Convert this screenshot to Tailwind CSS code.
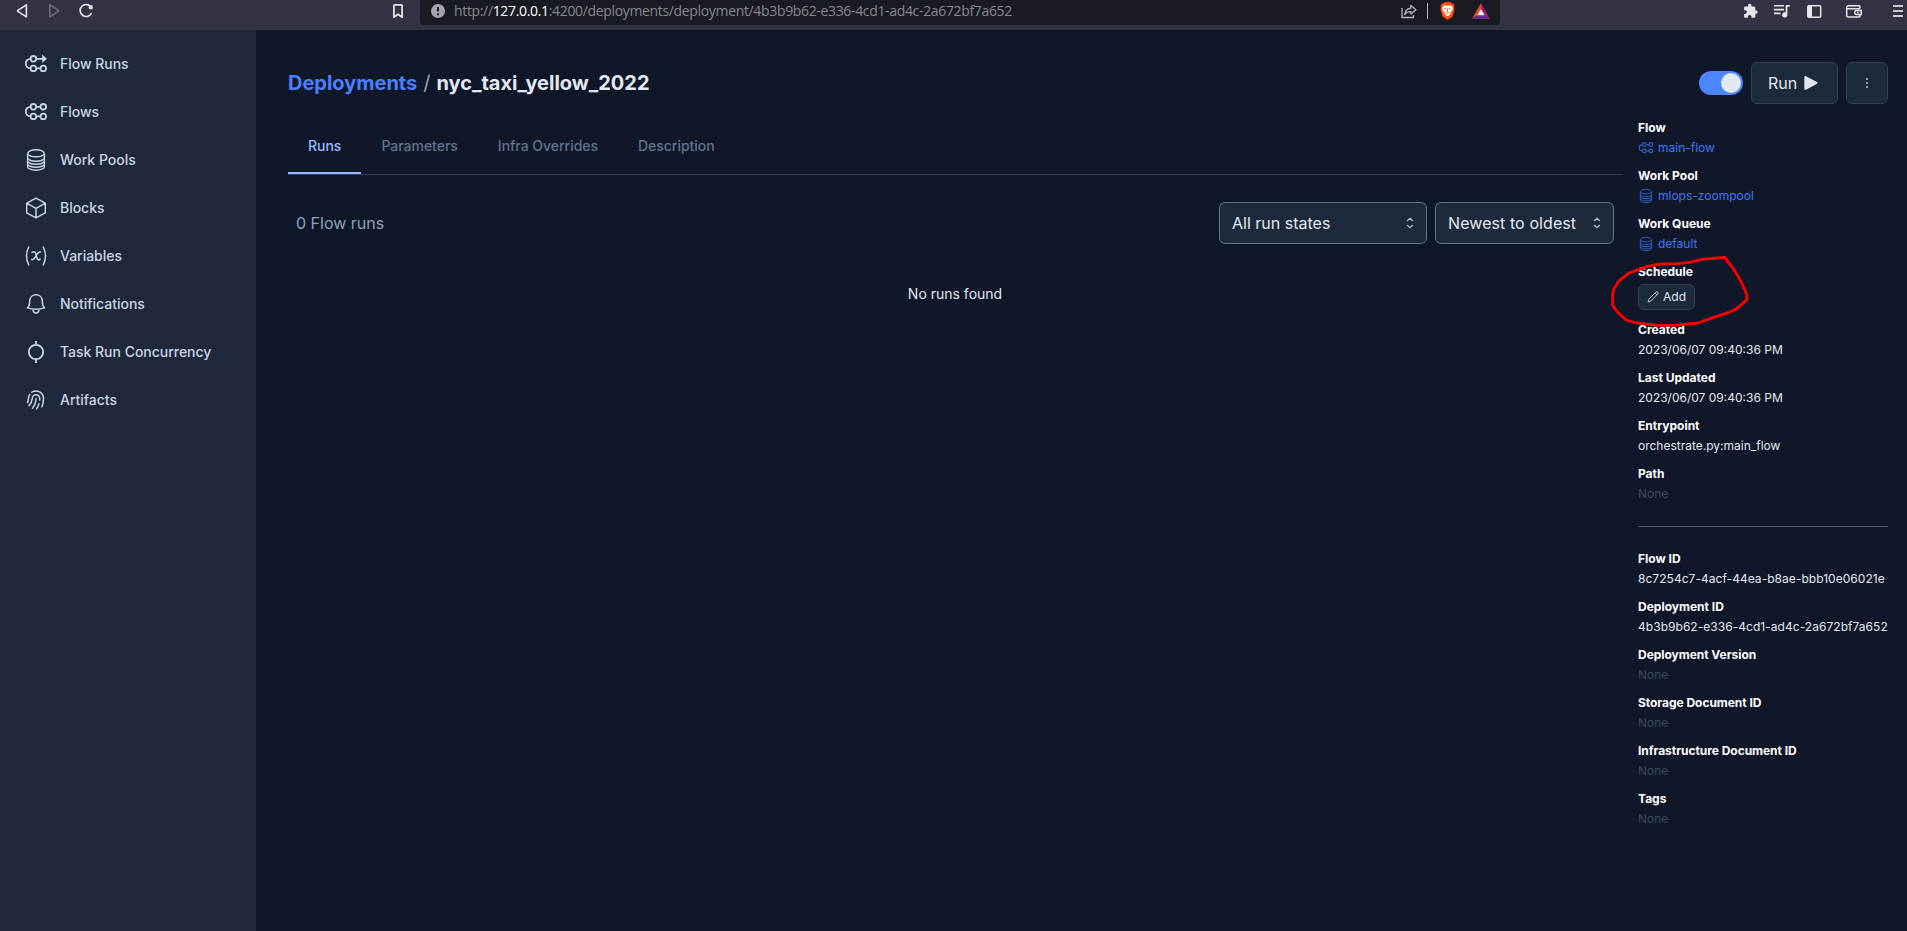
<!DOCTYPE html>
<html lang="en">
<head>
<meta charset="utf-8">
<title>Deployment</title>
<script src="https://cdn.jsdelivr.net/npm/@tailwindcss/browser@4"></script>
</head>
<body class="relative h-[931px] w-[1907px] overflow-hidden bg-[#101728] font-['Inter',sans-serif] text-sm text-slate-200">
<svg class="hidden">
  <defs>
    <symbol id="flow" viewBox="0 0 24 24"><g fill="none" stroke="currentColor" stroke-width="1.8"><circle cx="9.4" cy="6.8" r="2.8"/><circle cx="19.3" cy="6.8" r="2.8"/><circle cx="9.4" cy="16.4" r="2.8"/><circle cx="19.3" cy="16.4" r="2.8"/><path d="M12.2 6.8h4.3M12.2 16.4h4.3M6.6 6.8C3.6 6.8 1.8 9 1.8 11.6s1.8 4.8 4.8 4.8"/></g></symbol>
    <symbol id="pool" viewBox="0 0 24 24"><g fill="none" stroke="currentColor" stroke-width="1.4"><ellipse cx="12" cy="5.3" rx="8.4" ry="3.5"/><path d="M3.6 5.3v13.4c0 1.9 3.8 3.5 8.4 3.5s8.4-1.6 8.4-3.5V5.3M3.6 9.8c0 1.9 3.8 3.5 8.4 3.5s8.4-1.6 8.4-3.5M3.6 12.8c0 1.9 3.8 3.5 8.4 3.5s8.4-1.6 8.4-3.5M3.6 15.8c0 1.9 3.8 3.5 8.4 3.5s8.4-1.6 8.4-3.5"/></g></symbol>
  </defs>
</svg>

<!-- Browser toolbar -->
<header class="flex h-[30px] items-start bg-[#323443] text-[#e6e6ea]">
  <svg class="ml-4 mt-[3px] size-4" viewBox="0 0 16 16" fill="none" stroke="currentColor" stroke-width="1.6" stroke-linejoin="round"><path d="M10.4 1.8v12L1.8 8.3a.6.6 0 0 1 0-1z"/></svg>
  <svg class="ml-4 mt-[3px] size-4 text-[#6c6e7b]" viewBox="0 0 16 16" fill="none" stroke="currentColor" stroke-width="1.6" stroke-linejoin="round"><path d="M1.8 1.8v12l8.6-5.5a.6.6 0 0 0 0-1z"/></svg>
  <svg class="ml-[14px] mt-[3px] size-4" viewBox="0 0 16 16" fill="none" stroke="currentColor" stroke-width="1.6"><path d="M12.7 3.6A6 6 0 1 0 13.6 10"/><path d="M10 2.3h4.4v4.4z" fill="currentColor" stroke="none"/><circle cx="12.6" cy="4.4" r="2" fill="currentColor" stroke="none"/></svg>
  <svg class="ml-[298px] mt-[3px] h-4 w-[12px]" viewBox="0 0 12 16" fill="none" stroke="currentColor" stroke-width="1.7" stroke-linejoin="round"><path d="M1.9 2.8a1 1 0 0 1 1-1h6.2a1 1 0 0 1 1 1v11.4L6 11.2l-4.1 3z"/></svg>
  <div class="ml-4 flex h-[25px] w-[1080px] items-start rounded-b bg-[#191b22]">
    <svg class="ml-[11px] mt-1 size-[14px]" viewBox="0 0 14 14"><circle cx="7" cy="7" r="7" fill="#a2a4ad"/><path d="M7 3v4.6M7 9.3v2" stroke="#191b22" stroke-width="2"/></svg>
    <div class="ml-[9px] w-[560px] whitespace-nowrap font-['Open_Sans',sans-serif] text-[14px] leading-[22px] text-[#878890]"><span class="inline-block tracking-[-0.34px]">http://<span class="text-white">127.0.0.1</span>:4200/deployments/deployment/4b3b9b62-e336-4cd1-ad4c-2a672bf7a652</span></div>
    <svg class="ml-[387px] mt-[4px] size-4" viewBox="0 0 16 16" fill="none" stroke="#b4b5bb" stroke-width="1.3"><path d="M1 4v9.500h11.500V11"/><path d="M9.800 1.500 15 5.700l-5.200 4.200V7.600C7 7.500 5 8.600 3.800 10.800c.2-3.500 2.300-6 6-6.600z" stroke-linejoin="round"/></svg>
    <div class="ml-[10px] mt-[3px] h-4 w-px bg-[#b9bac0]"></div>
    <svg class="ml-[12px] mt-[2px] h-[18px] w-[15px]" viewBox="0 0 15 18"><path d="M4.500 0h6l1.400 1.600 1.700.2.900 2.700-.3 1.200.400 1.300-2 7.500L7.500 18l-5.100-3.500-2-7.500.400-1.300-.3-1.200.9-2.700 1.700-.2z" fill="#fb4c0c"/><path d="M4 3.300l3.500.5 3.500-.5L13 6l-.9 2.800-1.700 1.900.2 1.400-3.100 2.300-3.100-2.300.2-1.400L2.900 8.800 2 6z" fill="#fff"/><path d="M4.300 6.300l2 .6M10.700 6.300l-2 .6M7.500 6.500v3.400M5.500 10.500l2 1 2-1" stroke="#fb4c0c" stroke-width=".9" fill="none"/></svg>
    <svg class="ml-[17px] mt-[3px] h-4 w-[18px]" viewBox="0 0 18 16"><path d="M9 0v6L5.500 12.300 0 16z" fill="#ff4724"/><path d="M9 0l9 16-5.500-3.700L9 6z" fill="#9e1f63"/><path d="M0 16l5.500-3.700h7L18 16z" fill="#662d91"/><path d="M9 6l3.500 6.300h-7z" fill="#fff"/></svg>
  </div>
  <svg class="ml-[243px] mt-[3px] size-4" viewBox="0 0 16 16" fill="currentColor"><path d="M13.300 7.500h-1V4.800c0-.7-.6-1.300-1.300-1.300H8.500v-1a1.700 1.700 0 0 0-3.400 0v1H2.400c-.7 0-1.300.6-1.300 1.300v2.500h1a1.800 1.800 0 0 1 0 3.600h-1v2.500c0 .7.600 1.300 1.300 1.300h2.500v-1a1.800 1.800 0 0 1 3.600 0v1H11c.7 0 1.300-.6 1.300-1.300v-2.600h1a1.700 1.700 0 0 0 0-3.300z"/></svg>
  <svg class="ml-[14px] mt-[3px] h-4 w-[18px]" viewBox="0 0 18 16" fill="currentColor"><path d="M1 2h10v1.600H1zM1 5.800h10v1.600H1zM1 9.600h6.500v1.600H1z"/><path d="M12.700 2h4v1.800h-2.300v8a2.600 2.600 0 1 1-1.700-2.400z"/></svg>
  <svg class="ml-[16px] mt-[4px] size-[15px]" viewBox="0 0 15 15"><rect x=".8" y="1.800" width="12.900" height="11.400" rx="1" fill="none" stroke="currentColor" stroke-width="1.500"/><path d="M1 2h4v11H1z" fill="currentColor"/></svg>
  <svg class="ml-[23px] mt-[3px] h-4 w-[18px]" viewBox="0 0 18 16" fill="none" stroke="currentColor" stroke-width="1.500"><path d="M15 5.500V4a1.200 1.200 0 0 0-1.200-1.200H3.200A1.700 1.700 0 0 0 1.700 4.500v8c0 .9.600 1.500 1.500 1.500h10.600c.7 0 1.200-.5 1.200-1.200v-1.300M2 5.700h13"/><path d="M16.300 7.400h-4.600a2 2 0 0 0 0 4h4.600z"/><path d="M12 9.400h1.600"/></svg>
  <div class="ml-[30px] mt-[5px] flex w-[10px] flex-col gap-[3px]"><i class="h-[2px] bg-[#c9cad0]"></i><i class="h-[2px] bg-[#c9cad0]"></i><i class="h-[2px] bg-[#c9cad0]"></i></div>
</header>

<div class="flex h-[901px]">
  <nav class="flex w-64 shrink-0 flex-col bg-[#1f293b] pt-[10px] font-medium tracking-[-0.02px] text-slate-300">
    <a class="flex h-12 items-center gap-3 px-6"><svg class="size-6" viewBox="0 0 24 24"><g fill="none" stroke="currentColor" stroke-width="1.800"><circle cx="9.400" cy="6.800" r="2.800"/><circle cx="9.400" cy="16.400" r="2.800"/><circle cx="19.300" cy="16.400" r="2.800"/><path d="M12.200 6.800h7M12.200 16.400h4.300M6.600 6.800C3.600 6.800 1.800 9 1.800 11.600s1.800 4.800 4.800 4.800"/></g><path d="M18.200 2.600v8.400l4.800-4.200z" fill="currentColor"/></svg>Flow Runs</a>
    <a class="flex h-12 items-center gap-3 px-6"><svg class="size-6"><use href="#flow"/></svg>Flows</a>
    <a class="flex h-12 items-center gap-3 px-6"><svg class="size-6"><use href="#pool"/></svg>Work Pools</a>
    <a class="flex h-12 items-center gap-3 px-6"><svg class="size-6" viewBox="0 0 24 24" fill="none" stroke="currentColor" stroke-width="1.500" stroke-linejoin="round"><path d="M12 2.200l9.300 5v9.600L12 21.800l-9.300-5V7.200zM2.700 7.200l9.300 5.100 9.300-5.100M12 12.300v9.500"/></svg>Blocks</a>
    <a class="flex h-12 items-center gap-3 px-6"><svg class="size-6" viewBox="0 0 24 24" fill="none" stroke="currentColor" stroke-width="1.500" stroke-linecap="round"><path d="M4.700 3C2 8.500 2 15.500 4.700 21M19.300 3c2.700 5.500 2.700 12.500 0 18"/><path d="M8 8.300c2.200-1.300 3.300-.3 3.800 1.600l1.100 4c.5 1.900 1.700 2.600 3.300 1.300M16.500 8c-1.700-.4-2.800.7-4.300 3.700S9.400 16 7.700 15.600"/></svg>Variables</a>
    <a class="flex h-12 items-center gap-3 px-6"><svg class="size-6" viewBox="0 0 24 24" fill="none" stroke="currentColor" stroke-width="1.500" stroke-linejoin="round" stroke-linecap="round"><path d="M12 2.800c-3.900 0-6.300 2.800-6.300 6.500 0 3.400-.8 5.300-2.200 6.600 2.500.8 5.300 1.300 8.500 1.300s6-.5 8.500-1.300c-1.400-1.300-2.200-3.200-2.200-6.600 0-3.700-2.400-6.500-6.300-6.500zM9 17.300c0 2.200 1.300 3.700 3 3.700s3-1.500 3-3.700"/></svg>Notifications</a>
    <a class="flex h-12 items-center gap-3 px-6"><svg class="size-6" viewBox="0 0 24 24" fill="none" stroke="currentColor" stroke-width="1.800"><circle cx="12" cy="12" r="7.200"/><path d="M12 1v3.800M12 19.200V23"/></svg>Task Run Concurrency</a>
    <a class="flex h-12 items-center gap-3 px-6"><svg class="size-6" viewBox="0 0 24 24" fill="none" stroke="currentColor" stroke-width="1.500" stroke-linecap="round" stroke-linejoin="round"><path d="M7.860 4.240A7.500 7.500 0 0 1 19.500 10.500c0 2.920-.556 5.709-1.568 8.270M5.740 6.360A7.460 7.460 0 0 0 4.500 10.500a7.460 7.460 0 0 1-1.150 3.990M5 17.650A11.200 11.200 0 0 0 8.250 10.500a3.750 3.750 0 1 1 7.500 0c0 .527-.021 1.049-.064 1.565M12 10.500a14.900 14.900 0 0 1-3.600 9.750M15.030 15.600A18.600 18.600 0 0 1 12.500 21"/></svg>Artifacts</a>
  </nav>

  <main class="flex-1 pl-8 pr-[19px] pt-8">
    <div class="flex h-[42px] items-center justify-between">
      <h1 class="flex gap-[6px] text-xl font-bold leading-7 tracking-[-0.01px]"><span class="text-[#4a80ff]">Deployments</span><span class="font-normal text-slate-400">/</span><span>nyc_taxi_yellow_2022</span></h1>
      <div class="flex items-center gap-2">
        <div class="flex h-6 w-11 items-center justify-end rounded-full bg-[#4d84ff] pr-0.5"><i class="size-5 rounded-full bg-slate-200"></i></div>
        <button class="flex h-[42px] w-[87px] items-center gap-[7px] rounded-md border border-[#334155] bg-[#1e293b] pl-4 text-base">Run<svg class="h-4 w-[14px]" viewBox="0 0 14 16" fill="currentColor"><path d="M.3 2.200C.3 1.300 1.200.8 2 1.200l11 5.900c.7.400.7 1.300 0 1.700L2 14.700c-.8.400-1.700 0-1.700-1z"/></svg></button>
        <button class="flex size-[42px] items-center justify-center rounded-md border border-[#334155] bg-[#1e293b]"><span class="flex flex-col gap-[2px]"><i class="size-[2px] bg-slate-400"></i><i class="size-[2px] bg-slate-400"></i><i class="size-[2px] bg-slate-400"></i></span></button>
      </div>
    </div>

    <div class="mt-4 flex gap-4">
      <section class="min-w-0 flex-1">
        <div class="flex h-[55px] border-b border-[#334155] font-medium tracking-[-0.02px] text-slate-500">
          <a class="h-[54px] border-b-2 border-[#9bb8ff] px-5 leading-[52px] text-[#9bb8ff]">Runs</a>
          <a class="px-5 leading-[52px]">Parameters</a>
          <a class="px-5 leading-[52px]">Infra Overrides</a>
          <a class="px-5 leading-[52px]">Description</a>
        </div>
        <div class="mt-[19px] flex h-[58px] items-center gap-2 bg-[#0e1728] px-2 text-base">
          <span class="flex-1 text-slate-400">0 Flow runs</span>
          <div class="flex h-[42px] w-[208px] items-center justify-between rounded-md border border-slate-500 bg-[#1e293b] pl-3 pr-[12px]">All run states<svg class="h-3 w-2" viewBox="0 0 8 12" fill="none" stroke="#b6c1d0" stroke-width="1.200" stroke-linecap="round"><path d="M1.400 3.700 4 1.400l2.600 2.300M1.400 8.300 4 10.600l2.600-2.300"/></svg></div>
          <div class="flex h-[42px] w-[179px] items-center justify-between rounded-md border border-slate-500 bg-[#1e293b] pl-3 pr-[12px]"><span class="tracking-[0.08px]">Newest to oldest</span><svg class="h-3 w-2" viewBox="0 0 8 12" fill="none" stroke="#b6c1d0" stroke-width="1.200" stroke-linecap="round"><path d="M1.400 3.700 4 1.400l2.600 2.300M1.400 8.300 4 10.600l2.600-2.300"/></svg></div>
        </div>
        <p class="mt-8 text-center">No runs found</p>
      </section>

      <aside class="w-[250px] shrink-0 text-xs">
        <dl class="flex flex-col gap-3 whitespace-nowrap">
          <div><dt class="font-bold text-white">Flow</dt><dd class="mt-1 flex h-4 items-center gap-1 text-[#4076fa]"><svg class="size-4 opacity-75"><use href="#flow"/></svg>main-flow</dd></div>
          <div><dt class="font-bold text-white">Work Pool</dt><dd class="mt-1 flex h-4 items-center gap-1 text-[#4076fa]"><svg class="size-4 opacity-75"><use href="#pool"/></svg>mlops-zoompool</dd></div>
          <div><dt class="font-bold text-white">Work Queue</dt><dd class="mt-1 flex h-4 items-center gap-1 text-[#4076fa]"><svg class="size-4 opacity-75"><use href="#pool"/></svg>default</dd></div>
          <div><dt class="font-bold text-white">Schedule</dt><dd class="mt-1 flex h-[26px] w-[57px] items-center gap-1 rounded-md border border-[#334155] bg-[#1e293b] pl-2"><svg class="size-3" viewBox="0 0 12 12" fill="none" stroke="#b6c1d0" stroke-width="1"><path d="M1 11l.8-2.800L9 1.100a1.200 1.200 0 0 1 1.800 1.800L3.700 10.200zM8 2.100l1.800 1.800"/></svg>Add</dd></div>
          <div><dt class="font-bold text-white">Created</dt><dd class="mt-1">2023/06/07 09:40:36 PM</dd></div>
          <div><dt class="font-bold text-white">Last Updated</dt><dd class="mt-1">2023/06/07 09:40:36 PM</dd></div>
          <div><dt class="font-bold text-white">Entrypoint</dt><dd class="mt-1">orchestrate.py:main_flow</dd></div>
          <div><dt class="font-bold text-white">Path</dt><dd class="mt-1 text-[#3c4960]">None</dd></div>
        </dl>
        <hr class="my-6 border-[#475569]">
        <dl class="flex flex-col gap-3 whitespace-nowrap">
          <div><dt class="font-bold text-white">Flow ID</dt><dd class="mt-1 tracking-[0.04px]">8c7254c7-4acf-44ea-b8ae-bbb10e06021e</dd></div>
          <div><dt class="font-bold text-white">Deployment ID</dt><dd class="mt-1 tracking-[0.04px]">4b3b9b62-e336-4cd1-ad4c-2a672bf7a652</dd></div>
          <div><dt class="font-bold tracking-[-0.04px] text-white">Deployment Version</dt><dd class="mt-1 text-[#3c4960]">None</dd></div>
          <div><dt class="font-bold tracking-[-0.04px] text-white">Storage Document ID</dt><dd class="mt-1 text-[#3c4960]">None</dd></div>
          <div><dt class="font-bold tracking-[-0.04px] text-white">Infrastructure Document ID</dt><dd class="mt-1 text-[#3c4960]">None</dd></div>
          <div><dt class="font-bold text-white">Tags</dt><dd class="mt-1 text-[#3c4960]">None</dd></div>
        </dl>
      </aside>
    </div>
  </main>
</div>

<!-- Hand-drawn highlight around the schedule field -->
<svg class="pointer-events-none absolute left-[1590px] top-[240px] h-[90px] w-[170px]" viewBox="0 0 510 270" fill="none" stroke="#f80000" stroke-width="8.500" stroke-linejoin="round" stroke-linecap="round"><path d="M408 58l-3-6-25 2-50 5-30 8-40 4-50 1-40 8-55 20-30 25-13 21-4 20v30l12 18 30 27 30 8 60 7h50l75-7 45-17 45-14 22-10 34-29-1-17-18-40-21-35-26-33"/></svg>
</body>
</html>
